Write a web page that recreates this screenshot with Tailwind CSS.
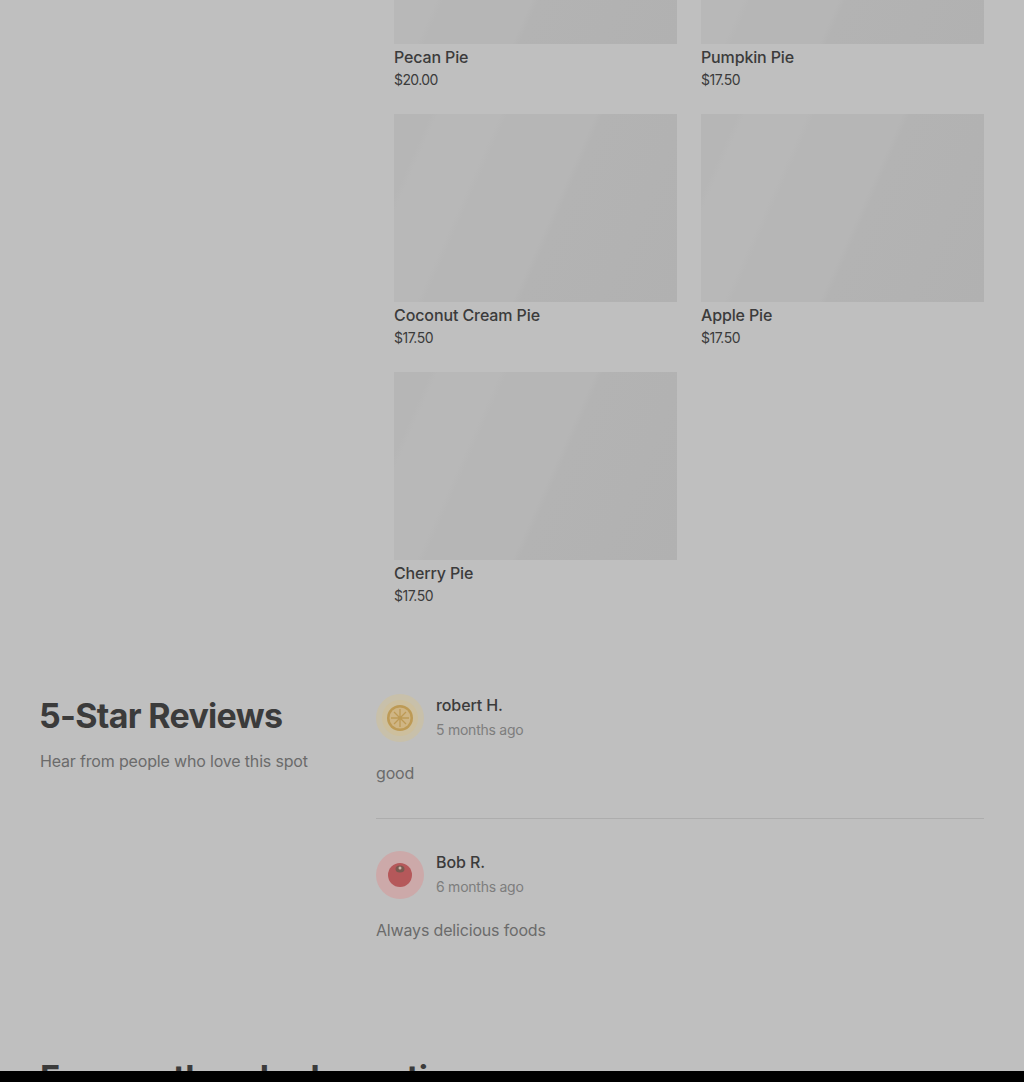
<!DOCTYPE html>
<html><head><meta charset="utf-8"><script src="https://cdn.jsdelivr.net/npm/@tailwindcss/browser@4"></script></head>
<body class="m-0">
<div class="w-[1024px] h-[1082px] flex flex-col overflow-hidden bg-[#bfbfbf] font-['Inter',sans-serif] text-[#3b3b3b]">
<main class="h-[1071px] overflow-hidden px-10">
  <section class="-mt-[144px] pl-[354px] grid grid-cols-[283px_283px] gap-x-6 gap-y-6">
    <div><div class="h-[187.6px] bg-[linear-gradient(114deg,#b6b6b6_0%,#b6b6b6_10%,#b8b8b8_12%,#b8b8b8_29%,#b6b6b6_31%,#b6b6b6_55%,#b3b3b3_57%,#b1b1b1_100%)]"></div><p class="mt-[1.4px] h-[24px] leading-[24px] text-[16px] font-medium tracking-[-0.15px]">Pecan Pie</p><p class="mt-[1px] h-[20px] leading-[20px] text-[14px] tracking-[-0.6px]">$20.00</p></div>
    <div><div class="h-[187.6px] bg-[linear-gradient(114deg,#b6b6b6_0%,#b6b6b6_10%,#b8b8b8_12%,#b8b8b8_29%,#b6b6b6_31%,#b6b6b6_55%,#b3b3b3_57%,#b1b1b1_100%)]"></div><p class="mt-[1.4px] h-[24px] leading-[24px] text-[16px] font-medium tracking-[-0.15px]">Pumpkin Pie</p><p class="mt-[1px] h-[20px] leading-[20px] text-[14px] tracking-[-0.5px]">$17.50</p></div>
    <div><div class="h-[187.6px] bg-[linear-gradient(114deg,#b6b6b6_0%,#b6b6b6_10%,#b8b8b8_12%,#b8b8b8_29%,#b6b6b6_31%,#b6b6b6_55%,#b3b3b3_57%,#b1b1b1_100%)]"></div><p class="mt-[1.4px] h-[24px] leading-[24px] text-[16px] font-medium tracking-[-0.1px]">Coconut Cream Pie</p><p class="mt-[1px] h-[20px] leading-[20px] text-[14px] tracking-[-0.5px]">$17.50</p></div>
    <div><div class="h-[187.6px] bg-[linear-gradient(114deg,#b6b6b6_0%,#b6b6b6_10%,#b8b8b8_12%,#b8b8b8_29%,#b6b6b6_31%,#b6b6b6_55%,#b3b3b3_57%,#b1b1b1_100%)]"></div><p class="mt-[1.4px] h-[24px] leading-[24px] text-[16px] font-medium tracking-[-0.15px]">Apple Pie</p><p class="mt-[1px] h-[20px] leading-[20px] text-[14px] tracking-[-0.5px]">$17.50</p></div>
    <div><div class="h-[187.6px] bg-[linear-gradient(114deg,#b6b6b6_0%,#b6b6b6_10%,#b8b8b8_12%,#b8b8b8_29%,#b6b6b6_31%,#b6b6b6_55%,#b3b3b3_57%,#b1b1b1_100%)]"></div><p class="mt-[1.4px] h-[24px] leading-[24px] text-[16px] font-medium tracking-[-0.15px]">Cherry Pie</p><p class="mt-[1px] h-[20px] leading-[20px] text-[14px] tracking-[-0.5px]">$17.50</p></div>
  </section>
  <section class="mt-[88px] grid grid-cols-[336px_608px]">
    <div>
      <h2 class="-ml-px text-[34px] leading-[44px] font-bold tracking-[-0.7px]">5-Star Reviews</h2>
      <p class="mt-[11px] text-[16px] leading-[24px] tracking-[-0.17px] text-[#6b6b6b]">Hear from people who love this spot</p>
    </div>
    <div>
      <div class="flex items-start gap-3 h-[48px]">
        <svg class="w-12 h-12 shrink-0 blur-[0.6px]" viewBox="0 0 48 48"><circle cx="24" cy="24" r="24" fill="#c8c0aa"/><circle cx="24" cy="24" r="18" fill="#cdbf9d"/><circle cx="24" cy="24" r="13" fill="#bd9a55"/><circle cx="24" cy="24" r="10.5" fill="#cfb584"/><path d="M24 15v18M15 24h18M18 18l12 12M30 18l-12 12" stroke="#bd9a55" stroke-width="1.3"/></svg>
        <div><p class="text-[16px] leading-[22px] font-medium tracking-[-0.1px]">robert H.</p><p class="mt-[2px] text-[14px] leading-[24px] tracking-[-0.25px] text-[#7d7d7d]">5 months ago</p></div>
      </div>
      <p class="mt-[19px] text-[16px] leading-[24px] tracking-[-0.17px] text-[#6b6b6b]">good</p>
      <div class="mt-[33px] mb-[32px] border-t border-[#adadad]"></div>
      <div class="flex items-start gap-3 h-[48px]">
        <svg class="w-12 h-12 shrink-0 blur-[0.6px]" viewBox="0 0 48 48"><circle cx="24" cy="24" r="24" fill="#cca9a9"/><circle cx="24" cy="24" r="12" fill="#b5585a"/><ellipse cx="24" cy="18" rx="4.5" ry="3.5" fill="#7a5a50"/><circle cx="24" cy="17" r="1.5" fill="#c9b7a9"/></svg>
        <div><p class="text-[16px] leading-[22px] font-medium tracking-[-0.1px]">Bob R.</p><p class="mt-[2px] text-[14px] leading-[24px] tracking-[-0.25px] text-[#7d7d7d]">6 months ago</p></div>
      </div>
      <p class="mt-[19px] text-[16px] leading-[24px] tracking-[-0.17px] text-[#6b6b6b]">Always delicious foods</p>
    </div>
  </section>
  <h2 class="mt-[114px] text-[34px] leading-[44px] font-bold tracking-[-0.47px]">Frequently asked questions</h2>
</main>
<div class="h-[11px] bg-black shrink-0"></div>
</div>
</body></html>
